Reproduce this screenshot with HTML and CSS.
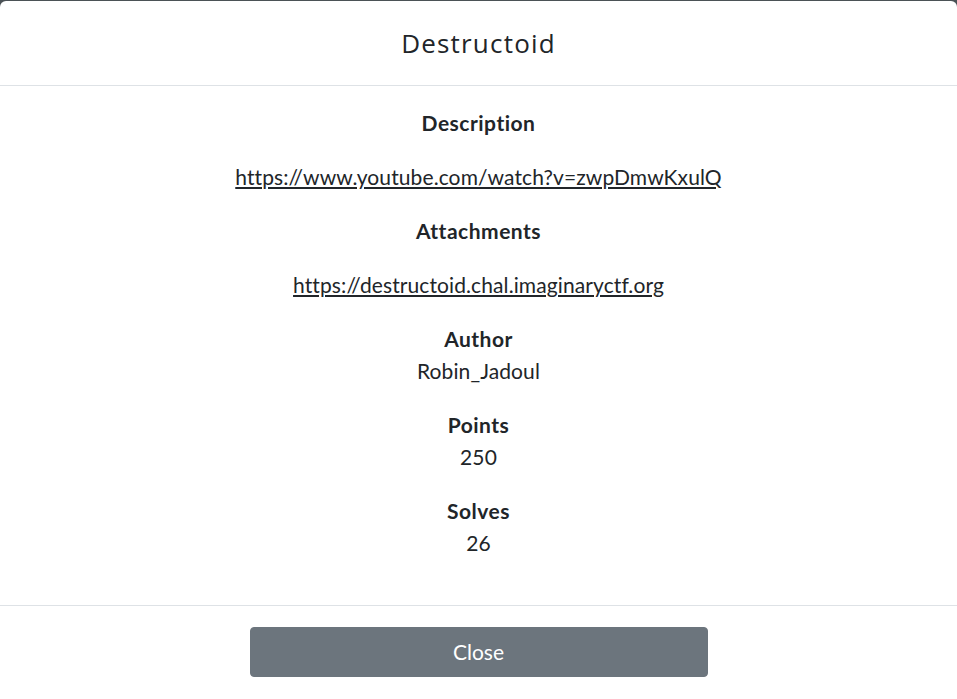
FILE: index.html
```html
<!DOCTYPE html>
<html lang="en">
<head>
<meta charset="utf-8">
<title>Destructoid</title>
<link rel="stylesheet" href="styles.css">
</head>
<body>
<div class="modal">
  <div class="modal-header">
    <h4 class="modal-title">Destructoid</h4>
  </div>
  <div class="modal-body">
    <h5 class="label label-gap">Description</h5>
    <p class="value value-gap"><a href="#">https://www.youtube.com/watch?v=zwpDmwKxulQ</a></p>
    <h5 class="label label-gap">Attachments</h5>
    <p class="value value-gap"><a href="#">https://destructoid.chal.imaginaryctf.org</a></p>
    <h5 class="label">Author</h5>
    <p class="value value-gap">Robin_Jadoul</p>
    <h5 class="label">Points</h5>
    <p class="value value-gap">250</p>
    <h5 class="label">Solves</h5>
    <p class="value">26</p>
  </div>
  <div class="modal-footer">
    <button class="btn-close" type="button">Close</button>
  </div>
</div>
</body>
</html>
```
FILE: styles.css
```css
html, body {
  margin: 0;
  padding: 0;
}
body {
  background: #4b5256;
  font-family: Lato, "Open Sans", sans-serif;
  color: #212529;
  padding-top: 1px;
  height: 699px;
  overflow: hidden;
}
.modal {
  background: #fff;
  border-radius: 6px;
  min-height: 760px;
}
.modal-header {
  padding: 22px 16px 22px;
  border-bottom: 1px solid #dee2e6;
  text-align: center;
}
.modal-title {
  margin: 0;
  font-family: "Open Sans", sans-serif;
  font-weight: 400;
  font-size: 26px;
  line-height: 40px;
  letter-spacing: 1.2px;
  color: #212529;
}
.modal-body {
  padding: 21px 16px 46px;
  text-align: center;
}
.label {
  margin: 0;
  font-size: 21px;
  font-weight: 700;
  line-height: 32px;
  letter-spacing: 0.5px;
}
.label-gap {
  margin-bottom: 22px;
}
.value {
  margin: 0;
  font-size: 21px;
  line-height: 32px;
  letter-spacing: 0.1px;
}
.value-gap {
  margin-bottom: 22px;
}
.value a {
  color: #212529;
  text-decoration: underline;
}
.modal-footer {
  border-top: 1px solid #dee2e6;
  padding: 21px 16px 22px;
  display: flex;
  justify-content: center;
}
.btn-close {
  width: 458px;
  height: 50px;
  padding-bottom: 2px;
  background: #6c757d;
  border: 1px solid #6c757d;
  border-radius: 4px;
  color: #fff;
  font-family: Lato, "Open Sans", sans-serif;
  font-size: 21px;
  cursor: pointer;
}
```
